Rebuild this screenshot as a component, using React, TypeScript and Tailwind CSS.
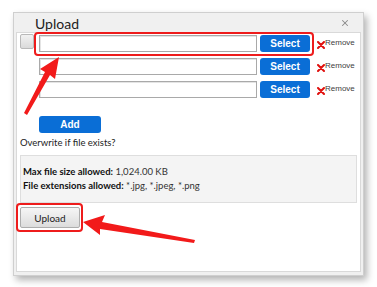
import { X } from 'lucide-react'

const uiFont = { fontFamily: 'Lato, "Noto Sans", sans-serif' }
const arialFont = { fontFamily: '"Liberation Sans", Arial, sans-serif' }

function FileRow({ withStub }: { withStub?: boolean }) {
  return (
    <div className="flex items-center h-[17px]">
      <div className="w-[21px] h-[17px] flex items-start">
        {withStub && (
          <div className="ml-[2px] -mt-[1px] w-[14px] h-[15px] bg-gradient-to-b from-[#f2f2f2] to-[#dadada] border border-[#b9b9b9] rounded-[2px]" />
        )}
      </div>
      <div className="w-[218px] h-[17px] border border-[#a9a9a9] bg-white shadow-[inset_1px_1px_0_#e4e4e4]" />
      <button
        type="button"
        className="ml-[3px] w-[50px] h-[17px] rounded-[3px] bg-[#0a6ed6] text-white text-[10px] font-bold leading-none flex items-center justify-center"
        style={arialFont}
      >
        Select
      </button>
      <div className="ml-[7px] flex items-start h-[12px]" style={arialFont}>
        <svg width="8" height="8" viewBox="0 0 8 8" className="mt-[3px]">
          <path d="M1 1 L7 7 M7 1 L1 7" stroke="#e0100e" strokeWidth="2" strokeLinecap="round" />
        </svg>
        <span className="text-[#404040] text-[8px] leading-[9px]">Remove</span>
      </div>
    </div>
  )
}

export default function App() {
  return (
    <div className="relative w-[377px] h-[287px] bg-white overflow-hidden pt-[12px] pl-[13px]" style={uiFont}>
      <div className="w-[351px] h-[264px] bg-[#f0f0f0] border border-[#cfcfcf] shadow-[3px_4px_7px_rgba(0,0,0,0.3)] flex flex-col px-[2px] pb-[3px]">
        <div className="h-[19px] flex items-center justify-between pl-[19px] pr-[11px]">
          <span className="text-[14px] leading-none text-[#222] mt-[2px]">Upload</span>
          <X className="w-[10px] h-[10px] text-[#8a8a8a] mt-[1px]" strokeWidth={2.5} />
        </div>
        <div className="flex-1 bg-white border border-[#d9d9d9] pt-[2px] pl-[1px] pr-[4px]">
          <div className="flex flex-col gap-[6px]">
            <FileRow withStub />
            <FileRow />
            <FileRow />
          </div>
          <div className="pl-[21px] mt-[18px]">
            <button
              type="button"
              className="w-[62px] h-[17px] rounded-[3px] bg-[#0a6ed6] text-white text-[10px] font-bold leading-none flex items-center justify-center"
              style={arialFont}
            >
              Add
            </button>
          </div>
          <div className="pl-[2px] mt-[3px] text-[9.5px] leading-[14px] text-[#222]">Overwrite if file exists?</div>
          <div className="ml-[2px] mt-[5px] w-[337px] h-[48px] bg-[#f4f4f4] border border-[#dedede] pl-[2px] pt-[9px] text-[9.5px] leading-[14px] text-[#111]">
            <div>
              <span className="font-bold">Max file size allowed:</span> <span className="text-[#333]">1,024.00 KB</span>
            </div>
            <div>
              <span className="font-bold">File extensions allowed:</span> <span className="text-[#333]">*.jpg, *.jpeg, *.png</span>
            </div>
          </div>
          <button
            type="button"
            className="ml-[2px] mt-[4px] w-[60px] h-[21px] rounded-[2px] border border-[#adadad] bg-gradient-to-b from-[#f6f6f6] to-[#dcdcdc] text-[10px] text-[#222] leading-none flex items-center justify-center"
          >
            Upload
          </button>
        </div>
      </div>

      {/* annotation highlights */}
      <div className="absolute left-[34px] top-[32px] w-[280px] h-[24px] border-2 border-[#ee1c1c] rounded-[4px]" />
      <div className="absolute left-[16px] top-[203px] w-[67px] h-[29px] border-2 border-[#ee1c1c] rounded-[4px]" />

      {/* annotation arrows */}
      <svg className="absolute left-0 top-0" width="377" height="287" viewBox="0 0 377 287">
        <polygon
          points="59,57 55,79 50,75 27,115 24,113 45,72 40,69"
          fill="#f21a1a"
        />
        <polygon
          points="83,222 105,215 102,222 195,240 194,243 100,229 100,235"
          fill="#f21a1a"
        />
      </svg>
    </div>
  )
}
